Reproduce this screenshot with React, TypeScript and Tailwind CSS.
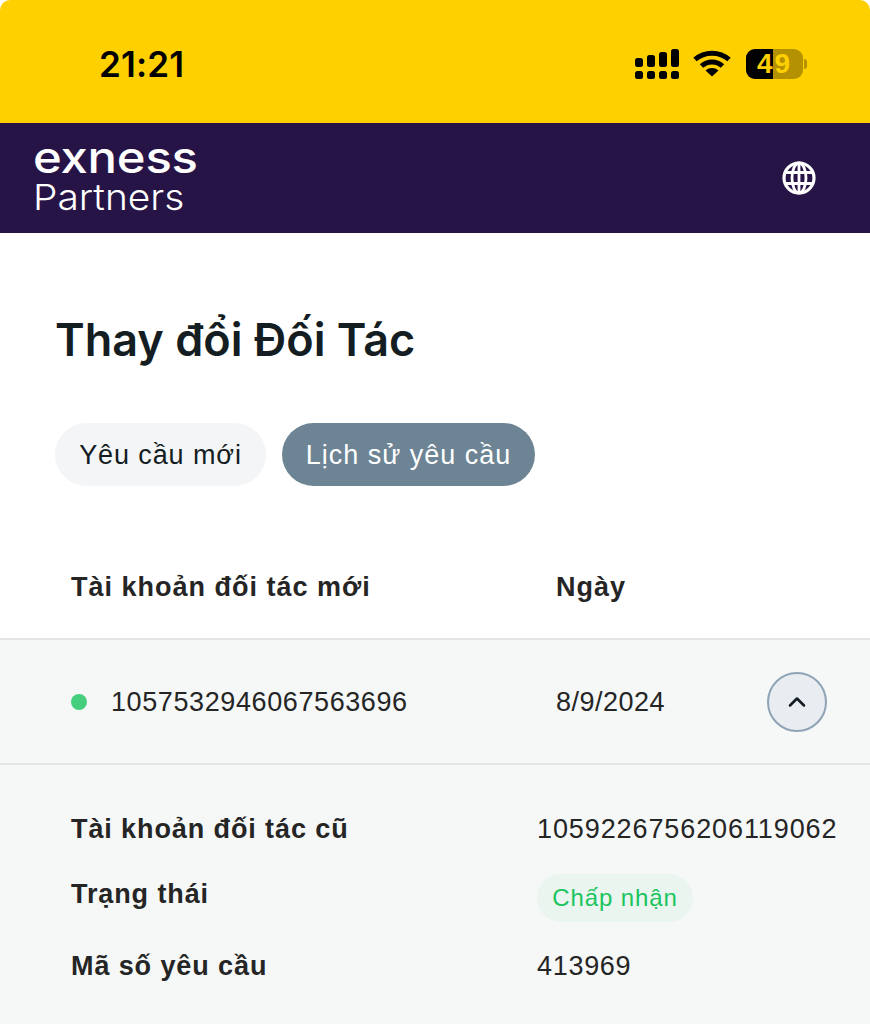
import { ChevronUp } from 'lucide-react';

const sans = { fontFamily: '"Liberation Sans", Arial, sans-serif' };
const inter = { fontFamily: 'Inter, sans-serif' };

function SignalIcon() {
  return (
    <svg width="44" height="30" viewBox="0 0 44 30" fill="#000">
      <rect x="0" y="9" width="8" height="9" rx="2.5" />
      <rect x="12" y="6" width="8" height="12" rx="2.5" />
      <rect x="24" y="3" width="8" height="15" rx="2.5" />
      <rect x="36" y="0" width="8" height="18" rx="2.5" />
      <rect x="0" y="22" width="8" height="8" rx="2.5" />
      <rect x="12" y="22" width="8" height="8" rx="2.5" />
      <rect x="24" y="22" width="8" height="8" rx="2.5" />
      <rect x="36" y="22" width="8" height="8" rx="2.5" />
    </svg>
  );
}

function WifiIcon() {
  return (
    <svg width="38" height="28" viewBox="0 0 38 28" fill="none" stroke="#000" strokeWidth="5">
      <path d="M2 10.5C11.5 2 26.5 2 36 10.5" />
      <path d="M8.5 17C14.5 11.5 23.5 11.5 29.5 17" />
      <path d="M19 27.5L12.5 21.5C16 18.2 22 18.2 25.5 21.5Z" fill="#000" stroke="none" />
    </svg>
  );
}

function Battery() {
  return (
    <div className="flex items-center">
      <div className="relative flex h-[30px] w-[57px] items-center justify-center overflow-hidden rounded-[9px] bg-[#b39100]">
        <div className="absolute inset-y-0 left-0 w-[27px] bg-black" />
        <span
          className="relative text-[28px] leading-none font-bold tracking-[2px] text-[#ffd000]"
          style={sans}
        >
          49
        </span>
      </div>
      <div className="ml-[1px] h-[10px] w-[3px] rounded-r-full bg-[#b39100]" />
    </div>
  );
}

function GlobeIcon() {
  return (
    <svg width="34" height="34" viewBox="0 0 34 34" fill="none" stroke="#fff" strokeWidth="3.2">
      <circle cx="17" cy="17" r="15" />
      <ellipse cx="17" cy="17" rx="7" ry="15" strokeWidth="2.8" />
      <path d="M3.5 11.5H30.5M3.5 22.5H30.5M17 2V32" strokeWidth="2.8" />
    </svg>
  );
}

export default function App() {
  return (
    <div className="h-[1024px] w-[870px] overflow-hidden bg-white" style={sans}>
      {/* Status bar */}
      <div className="flex h-[123px] items-start justify-between rounded-t-[10px] bg-[#ffd000] pr-[63px] pl-[99px]">
        <span
          className="mt-[43px] text-[35px] leading-[42px] font-semibold tracking-[0.2px] text-black"
          style={inter}
        >
          21:21
        </span>
        <div className="mt-[49px] flex items-start">
          <SignalIcon />
          <div className="ml-[14px]">
            <WifiIcon />
          </div>
          <div className="ml-[15px]">
            <Battery />
          </div>
        </div>
      </div>

      {/* Header */}
      <div className="flex h-[110px] items-center justify-between bg-[#271446] pr-[54px] pl-[33px]">
        <div className="flex flex-col text-white" style={inter}>
          <span className="origin-left scale-x-[1.14] text-[43px] leading-[36px] font-medium tracking-[-0.2px]">exness</span>
          <span className="mt-[1px] origin-left scale-x-[1.08] text-[36px] leading-[42px] font-light">Partners</span>
        </div>
        <GlobeIcon />
      </div>

      {/* Page title */}
      <h1
        className="mt-[78px] pl-[55px] text-[45px] leading-[58px] font-semibold text-[#141d22]"
        style={inter}
      >
        Thay đổi Đối Tác
      </h1>

      {/* Tabs */}
      <div className="mt-[54px] flex gap-[16px] pl-[55px]">
        <button className="h-[63px] w-[211px] rounded-full bg-[#f3f5f7] pt-[2px] text-[27px] tracking-[0.9px] text-[#141d22]">
          Yêu cầu mới
        </button>
        <button className="h-[63px] w-[253px] rounded-full bg-[#6d8494] pt-[2px] text-[27px] tracking-[1px] text-white">
          Lịch sử yêu cầu
        </button>
      </div>

      {/* Table head */}
      <div className="mt-[54px] flex h-[100px] items-start border-b-2 border-[#e2e4e5] pt-[29px] text-[27px] leading-[36px] font-bold tracking-[1px] text-[#252525]">
        <div className="w-[556px] pl-[71px]">Tài khoản đối tác mới</div>
        <div>Ngày</div>
      </div>

      {/* Expanded row */}
      <div className="bg-[#f6f8f8]">
        <div className="flex h-[125px] items-center border-b-2 border-[#e2e4e5] pt-[1px] text-[27px] text-[#252525]">
          <div className="flex w-[556px] items-center pl-[71px]">
            <span className="h-[16px] w-[16px] rounded-full bg-[#45cf7d]" />
            <span className="ml-[24px] tracking-[0.6px]">1057532946067563696</span>
          </div>
          <div className="w-[211px] tracking-[0.5px]">8/9/2024</div>
          <div className="flex h-[60px] w-[60px] items-center justify-center rounded-full border-2 border-[#8ea3b5] bg-[#e9ecf0]">
            <ChevronUp size={28} strokeWidth={2.2} color="#141d22" />
          </div>
        </div>

        <div className="h-[260px] pt-[44px] pl-[71px] text-[27px] leading-[40px] text-[#252525]">
          <div className="flex items-center">
            <div className="w-[466px] font-bold tracking-[0.9px]">Tài khoản đối tác cũ</div>
            <div className="tracking-[0.9px]">1059226756206119062</div>
          </div>
          <div className="mt-[25px] flex items-start">
            <div className="w-[466px] font-bold tracking-[0.9px]">Trạng thái</div>
            <div className="flex h-[48px] w-[156px] items-center justify-center rounded-full bg-[#eaf5f0] text-[24px] tracking-[0.9px] text-[#1cc45f]">
              Chấp nhận
            </div>
          </div>
          <div className="mt-[24px] flex items-center">
            <div className="w-[466px] font-bold tracking-[0.9px]">Mã số yêu cầu</div>
            <div className="tracking-[0.7px]">413969</div>
          </div>
        </div>
      </div>
    </div>
  );
}
